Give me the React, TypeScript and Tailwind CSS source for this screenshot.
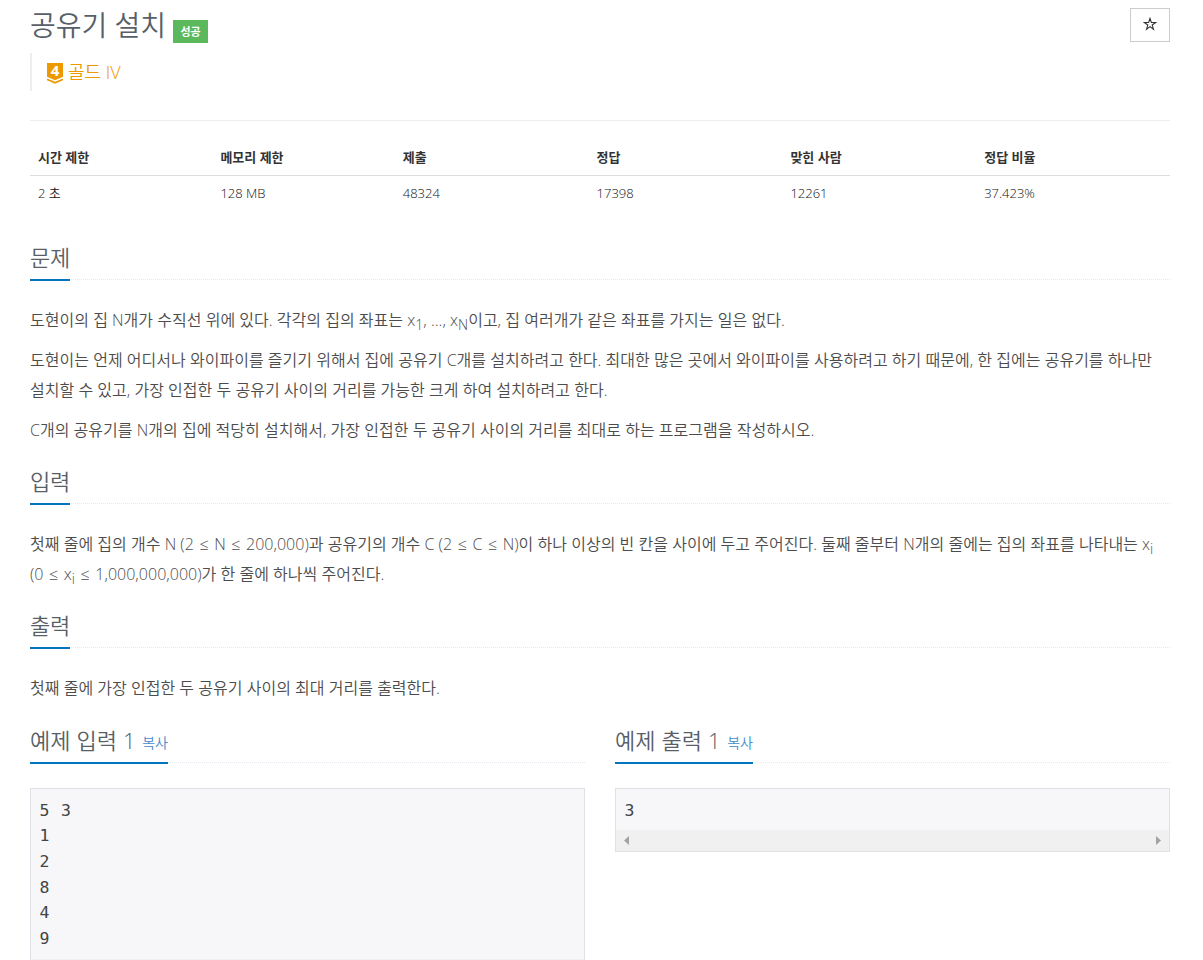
import React from 'react';

interface SectionTitleProps {
  title: string;
  copyable?: boolean;
}

const stats = [
  { label: '시간 제한', value: '2 초', width: 'w-[16%]' },
  { label: '메모리 제한', value: '128 MB', width: 'w-[16%]' },
  { label: '제출', value: '48324', width: 'w-[17%]' },
  { label: '정답', value: '17398', width: 'w-[17%]' },
  { label: '맞힌 사람', value: '12261', width: 'w-[17%]' },
  { label: '정답 비율', value: '37.423%', width: 'w-[17%]' },
];

const SectionTitle: React.FC<SectionTitleProps> = ({ title, copyable = false }) => (
  <div className="flex h-[38px] items-start border-b border-dotted border-[#e4e9f0]">
    <h2 className={`${copyable ? 'tracking-[0.005em]' : 'tracking-[-0.01em]'} h-[39px] shrink-0 whitespace-nowrap border-b-2 border-[#0076c0] text-[22px] leading-[31px] text-[#585f69]`}>
      {title}
      {copyable && <a className="relative -top-px ml-[6.5px] text-[14px] tracking-normal text-[#428bca]">복사</a>}
    </h2>
  </div>
);

const Sub: React.FC<{ children: React.ReactNode }> = ({ children }) => (
  <sub className="text-[14px]">{children}</sub>
);

const Le = () => <span className="mx-[1.4px]">≤</span>;

// Gold tier shield with a chevron under it
const TierBadge = () => (
  <span className="relative mt-[3px] block h-[21px] w-[16px] shrink-0 text-center text-[15px] font-bold leading-[16px] text-white">
    <svg width="16" height="21" viewBox="0 0 16 21" className="absolute inset-0">
      <path d="M0 0h16v13.8L8 17.2 0 13.8z" fill="#ec9a00" />
      <path d="M0 15.4l8 3.4 8-3.4v1.8l-8 3.6-8-3.6z" fill="#ec9a00" />
    </svg>
    <span className="relative -top-px">4</span>
  </span>
);

const App: React.FC = () => {
  return (
    <div className="h-[960px] overflow-hidden bg-white pl-[30px] pr-[33px] font-['Open_Sans','Noto_Sans_CJK_KR',sans-serif] font-[350] text-[#333]">
      <header className="flex h-[121px] justify-between border-b border-[#eee]">
        <div>
          <div className="flex h-[53px] items-start">
            <h1 className="whitespace-nowrap pt-[4px] text-[28px] leading-[42px] text-[#585f69]">공유기 설치</h1>
            <span className="ml-[7px] mt-[20px] h-[23px] w-[35px] bg-[#5cb85c] text-center text-[11px] font-bold leading-[23px] text-white">
              성공
            </span>
          </div>
          <div className="flex h-[38px] items-center border-l-2 border-[#eee] pl-[15px] text-[#ec9a00]">
            <TierBadge />
            <span className="ml-[5px] text-[18px] leading-[30px]">골드 IV</span>
          </div>
        </div>
        <button className="mt-[8px] flex h-[34px] w-[40px] items-center justify-center border border-[#ccc] pb-[2px] pr-px text-[#333]">
          <svg width="14" height="14" viewBox="0 0 14 14">
            <path d="M7 1.4l1.35 4.1h4.3L9.2 8.05l1.3 4.15L7 9.65 3.5 12.2l1.3-4.15L1.35 5.5h4.3z" fill="none" stroke="currentColor" strokeWidth="1.1" />
          </svg>
        </button>
      </header>

      <table className="mt-[20px] w-full table-fixed text-left text-[13px]">
        <thead>
          <tr className="h-[34px] border-b border-[#ddd]">
            {stats.map((item) => (
              <th key={item.label} className={`${item.width} px-2 text-[13px] font-bold`}>{item.label}</th>
            ))}
          </tr>
        </thead>
        <tbody>
          <tr className="h-[36px]">
            {stats.map((item) => (
              <td key={item.label} className="px-2 text-[13px] text-[#111]">{item.value}</td>
            ))}
          </tr>
        </tbody>
      </table>

      <main className="text-[16px] leading-[30px] tracking-[0.02px] text-[#4c4c4c]">
        <section className="mt-[31px]">
          <SectionTitle title="문제" />
          <div className="mt-[25px] space-y-[10px]">
            <p>도현이의 집 N개가 수직선 위에 있다. 각각의 집의 좌표는 x<Sub>1</Sub>, ..., x<Sub>N</Sub>이고, 집 여러개가 같은 좌표를 가지는 일은 없다.</p>
            <p className="whitespace-nowrap">
              도현이는 언제 어디서나 와이파이를 즐기기 위해서 집에 공유기 C개를 설치하려고 한다. 최대한 많은 곳에서 와이파이를 사용하려고 하기 때문에, 한 집에는 공유기를 하나만
              <br />
              설치할 수 있고, 가장 인접한 두 공유기 사이의 거리를 가능한 크게 하여 설치하려고 한다.
            </p>
            <p>C개의 공유기를 N개의 집에 적당히 설치해서, 가장 인접한 두 공유기 사이의 거리를 최대로 하는 프로그램을 작성하시오.</p>
          </div>
        </section>

        <section className="mt-[21px]">
          <SectionTitle title="입력" />
          <p className="mt-[25px] whitespace-nowrap">
            첫째 줄에 집의 개수 N (2 <Le /> N <Le /> 200,000)과 공유기의 개수 C (2 <Le /> C <Le /> N)이 하나 이상의 빈 칸을 사이에 두고 주어진다. 둘째 줄부터 N개의 줄에는 집의 좌표를 나타내는 x<Sub>i</Sub>
            <br />
            (0 <Le /> x<Sub>i</Sub> <Le /> 1,000,000,000)가 한 줄에 하나씩 주어진다.
          </p>
        </section>

        <section className="mt-[21px]">
          <SectionTitle title="출력" />
          <p className="mt-[25px]">첫째 줄에 가장 인접한 두 공유기 사이의 최대 거리를 출력한다.</p>
        </section>
      </main>

      <div className="mt-[22px] grid grid-cols-2 gap-[30px]">
        <section>
          <SectionTitle title="예제 입력 1" copyable />
          <div className="mt-[25px] h-[193px] border border-[#e0e0e7] bg-[#f7f7f9]">
            <pre className="h-[170px] px-[8.5px] pt-[8.6px] font-['DejaVu_Sans_Mono',monospace] text-[16.5px] leading-[25.7px] tracking-[0.87px] text-[#444]">
              {'5 3\n1\n2\n8\n4\n9'}
            </pre>
            <div className="h-[21px] bg-[#f0f0f0]" />
          </div>
        </section>
        <section>
          <SectionTitle title="예제 출력 1" copyable />
          <div className="mt-[25px] h-[64px] border border-[#e0e0e7] bg-[#f7f7f9]">
            <pre className="h-[41px] px-[8.5px] pt-[8.6px] font-['DejaVu_Sans_Mono',monospace] text-[16.5px] leading-[25.7px] text-[#444]">3</pre>
            {/* Horizontal scrollbar */}
            <div className="flex h-[21px] items-center justify-between bg-[#f0f0f0] px-[8px] text-[#a3a3a3]">
              <svg width="5" height="9" viewBox="0 0 5 9"><path d="M5 0v9L0 4.5z" fill="currentColor" /></svg>
              <svg width="5" height="9" viewBox="0 0 5 9"><path d="M0 0v9l5-4.5z" fill="currentColor" /></svg>
            </div>
          </div>
        </section>
      </div>
    </div>
  );
};

export default App;
